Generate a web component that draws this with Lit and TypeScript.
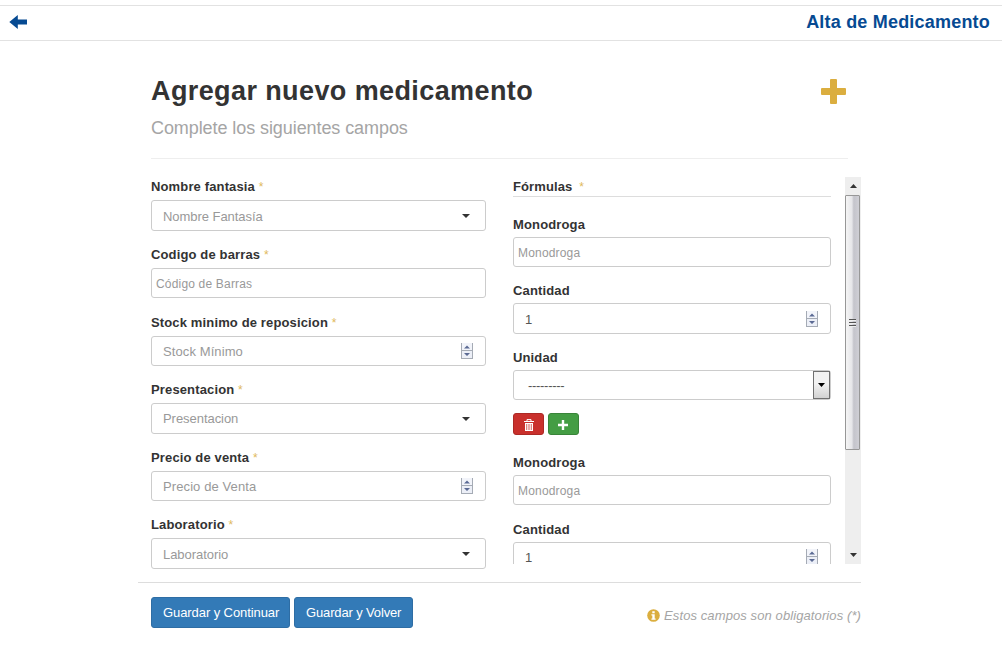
import { LitElement, html, css } from "lit";
import { customElement, property } from "lit/decorators.js";

type Kind = "combo" | "text" | "number" | "select";

@customElement("form-field")
class FormField extends LitElement {
  @property() label = "";
  @property() text = "";
  @property() kind: Kind = "text";
  @property({ type: Boolean }) required = false;
  @property({ type: Boolean }) filled = false;

  static styles = css`
    :host { display: block; }
    .label { display: block; height: 28px; line-height: 30px; font-size: 13px; font-weight: bold; letter-spacing: 0.14px; color: #333; white-space: nowrap; }
    :host(:not([required])) .label { line-height: 31px; }
    .star { color: #e0b95c; font-weight: normal; font-size: 12px; }
    .box { box-sizing: border-box; display: flex; align-items: center; border: 1px solid #ccc; border-radius: 3px; background: #fff; height: 30px; color: #999; font-size: 13px; padding-left: 11px; }
    .box.combo { height: 31px; padding-right: 15px; }
    .box.combo .value { padding-top: 1.4px; letter-spacing: -0.05px; }
    .box.text { font-size: 12px; letter-spacing: 0.18px; padding-left: 4px; }
    .box.text .value { padding-top: 2px; }
    .box.number { padding-right: 12px; letter-spacing: 0.1px; }
    .box.number .value { padding-top: 2px; }
    .box.filled { height: 31px; color: #555; }
    .box.select { padding-left: 14px; padding-right: 0; color: #555; }
    .value { flex: 1; line-height: 16px; white-space: nowrap; }
    .select .value { letter-spacing: -0.3px; padding-top: 2px; }
    svg { display: block; flex: none; }
    .drop { box-sizing: border-box; width: 17px; height: 28px; border: 1px solid #707070; background: linear-gradient(#f2f2f2 45%, #d2d2d2); display: grid; place-items: center; }
  `;

  private ornament() {
    switch (this.kind) {
      case "combo":
        return html`<svg width="8" height="4" viewBox="0 0 8 4"><path d="M0 0H8L4 4Z" fill="#333" /></svg>`;
      case "number":
        return html`<svg width="12" height="16" viewBox="0 0 12 16">
          <path d="M0 0H12V7H0Z" fill="#f2f4fa" /><path d="M0 8H12V16H0Z" fill="#eceff7" />
          <path d="M.5 0V16M11.5 0V16" stroke="#a5abb5" /><path d="M0 7.5H12M0 15.5H12" stroke="#a5abb5" />
          <path d="M3 5.5L6 2.5L9 5.5ZM3 10L6 13L9 10Z" fill="#5b6a94" />
        </svg>`;
      case "select":
        return html`<span class="drop"><svg width="7" height="4" viewBox="0 0 7 4"><path d="M0 0H7L3.5 4Z" fill="#000" /></svg></span>`;
      default:
        return "";
    }
  }

  render() {
    return html`
      <span class="label">${this.label}${this.required ? html` <span class="star">*</span>` : ""}</span>
      <div class="box ${this.kind} ${this.filled ? "filled" : ""}">
        <span class="value">${this.text}</span>${this.ornament()}
      </div>`;
  }
}

@customElement("app-root")
class AppRoot extends LitElement {
  static styles = css`
    :host { display: block; box-sizing: border-box; width: 1002px; height: 651px; padding-top: 5px; overflow: hidden; background: #fff; color: #333; font-family: "Liberation Sans", Arial, sans-serif; font-size: 13px; }
    svg { display: block; flex: none; }
    .bar { box-sizing: border-box; height: 36px; border-top: 1px solid #e2e2e2; border-bottom: 1px solid #e2e2e2; display: flex; align-items: center; justify-content: space-between; padding: 0 12px 2px 9px; color: #064a92; }
    .bar-title { font-size: 18px; line-height: 20px; font-weight: bold; letter-spacing: 0.2px; }
    .heading { box-sizing: border-box; margin-left: 151px; width: 697px; height: 118px; border-bottom: 1px solid #eee; display: flex; justify-content: space-between; padding: 34px 2px 0 0; }
    h1 { margin: 0; font-size: 27px; line-height: 32px; letter-spacing: 0.4px; }
    .sub { font-size: 18px; line-height: 22px; color: #a5a5a5; margin: 10px 0 0; letter-spacing: -0.08px; }
    .plus { margin-top: 4px; }
    .columns { display: flex; margin-left: 151px; height: 423px; }
    .left { width: 335px; padding-top: 13.45px; display: flex; flex-direction: column; }
    .left form-field { height: 67.6px; flex: none; }
    .scroll { margin: 18px 0 0 27px; width: 348px; height: 387px; display: flex; justify-content: space-between; overflow: hidden; }
    .list { width: 318px; height: 387px; overflow: hidden; }
    .formulas { box-sizing: border-box; height: 20px; line-height: 19px; border-bottom: 1px solid #ddd; font-weight: bold; letter-spacing: 0.12px; }
    .formulas span { color: #e0b95c; font-weight: normal; font-size: 12px; margin-left: 3px; }
    .block { height: 238.4px; padding-top: 12px; box-sizing: border-box; }
    .block form-field { height: 66.4px; }
    .tools { display: flex; gap: 4px; margin-top: 4.8px; }
    .tool { box-sizing: border-box; width: 31px; height: 22px; border-radius: 3px; display: grid; place-items: center; padding-top: 2px; }
    .remove { background: #c9302c; border: 1px solid #ac2925; }
    .add { background: #449d44; border: 1px solid #398439; padding: 3px 1px 0 0; }
    .track { width: 16px; height: 387px; background: #eee; display: flex; flex-direction: column; justify-content: space-between; }
    .arrow { height: 18px; display: grid; place-items: center; }
    .thumb { box-sizing: border-box; width: 15px; height: 255px; border: 1px solid #979797; border-radius: 1px; background: linear-gradient(90deg, #f5f5f5, #e6e6e9 45%, #c4c4cb 60%, #cfcfd5); display: grid; place-items: center; }
    .rest { flex: 1; }
    .footer { box-sizing: border-box; margin-left: 138px; width: 723px; border-top: 1px solid #ddd; padding: 14px 0 0 13px; display: flex; justify-content: space-between; }
    .actions { display: flex; gap: 4px; }
    .btn { box-sizing: border-box; height: 31px; border: 1px solid #2e6da4; border-radius: 3px; background: #337ab7; color: #fff; line-height: 29px; padding-left: 11px; width: 139px; letter-spacing: -0.08px; white-space: nowrap; }
    .btn.back { width: 119px; letter-spacing: -0.14px; }
    .note { display: flex; align-items: center; gap: 4px; color: #a5a5a5; height: 36px; letter-spacing: 0.1px; }
  `;

  private doseFields() {
    return html`
      <form-field label="Monodroga" text="Monodroga" kind="text"></form-field>
      <form-field label="Cantidad" text="1" kind="number" filled></form-field>`;
  }

  render() {
    const fields: [string, string, Kind][] = [
      ["Nombre fantasia", "Nombre Fantasía", "combo"],
      ["Codigo de barras", "Código de Barras", "text"],
      ["Stock minimo de reposicion", "Stock Mínimo", "number"],
      ["Presentacion", "Presentacion", "combo"],
      ["Precio de venta", "Precio de Venta", "number"],
      ["Laboratorio", "Laboratorio", "combo"],
    ];
    return html`
      <div class="bar">
        <svg width="18" height="15" viewBox="0 0 18 15"><path d="M.3 7L8.8 0V4.4H18V9.6H8.8V14Z" fill="#064a92" /></svg>
        <span class="bar-title">Alta de Medicamento</span>
      </div>
      <div class="heading">
        <div><h1>Agregar nuevo medicamento</h1><p class="sub">Complete los siguientes campos</p></div>
        <svg class="plus" width="25" height="25" viewBox="0 0 25 25"><path d="M10 0H15Q16 0 16 1V9H24Q25 9 25 10V15Q25 16 24 16H16V24Q16 25 15 25H10Q9 25 9 24V16H1Q0 16 0 15V10Q0 9 1 9H9V1Q9 0 10 0Z" fill="#dbae3f" /></svg>
      </div>
      <div class="columns">
        <div class="left">
          ${fields.map(([l, t, k]) => html`<form-field label=${l} text=${t} .kind=${k} required></form-field>`)}
        </div>
        <div class="scroll">
          <div class="list">
            <div class="formulas">Fórmulas <span>*</span></div>
            <div class="block">
              ${this.doseFields()}
              <form-field label="Unidad" text="---------" kind="select"></form-field>
              <div class="tools">
                <span class="tool remove"><svg width="10" height="12" viewBox="0 0 10 12">
                  <path d="M0 2.5H10M3 2.5V.6H7V2.5" fill="none" stroke="#fff" />
                  <path d="M1 4H9V12H1Z" fill="#fff" /><path d="M2.5 5V11M4.2 5V11M5.8 5V11M7.5 5V11" stroke="#c9302c" stroke-width=".6" />
                </svg></span>
                <span class="tool add"><svg width="10" height="10" viewBox="0 0 10 10"><path d="M3.8 0H6.2V3.8H10V6.2H6.2V10H3.8V6.2H0V3.8H3.8Z" fill="#fff" /></svg></span>
              </div>
            </div>
            <div class="block">${this.doseFields()}</div>
          </div>
          <div class="track">
            <span class="arrow"><svg width="7" height="4" viewBox="0 0 7 4"><path d="M0 4H7L3.5 0Z" fill="#333" /></svg></span>
            <span class="thumb"><svg width="7" height="8" viewBox="0 0 7 8"><path d="M0 .5H7M0 3.5H7M0 6.5H7" stroke="#555" /><path d="M0 1.5H7M0 4.5H7M0 7.5H7" stroke="#eee" /></svg></span>
            <span class="rest"></span>
            <span class="arrow"><svg width="7" height="4" viewBox="0 0 7 4"><path d="M0 0H7L3.5 4Z" fill="#333" /></svg></span>
          </div>
        </div>
      </div>
      <div class="footer">
        <div class="actions"><span class="btn">Guardar y Continuar</span><span class="btn back">Guardar y Volver</span></div>
        <div class="note">
          <svg width="13" height="13" viewBox="0 0 13 13"><circle cx="6.5" cy="6.5" r="6.3" fill="#dbae3f" /><path d="M5.3 2.2H7.7V4.2H5.3ZM4.4 5.2H7.7V9.4H8.6V10.8H4.4V9.4H5.3V6.6H4.4Z" fill="#fff" /></svg>
          <em>Estos campos son obligatorios (*)</em>
        </div>
      </div>`;
  }
}
